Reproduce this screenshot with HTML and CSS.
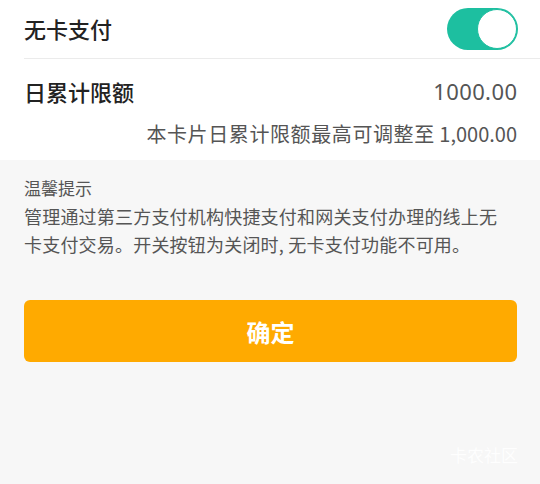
FILE: index.html
```html
<!DOCTYPE html>
<html lang="zh">
<head>
<meta charset="utf-8">
<link rel="stylesheet" href="styles.css">
</head>
<body>
<div class="page">
  <section class="card">
    <div class="row row-switch">
      <span class="label">无卡支付</span>
      <span class="toggle"><span class="knob"></span></span>
    </div>
    <div class="row row-limit">
      <span class="label">日累计限额</span>
      <span class="value">1000.00</span>
    </div>
    <div class="hint"><span class="hint-cjk">本卡片日累计限额最高可调整至</span> 1,000.00</div>
  </section>
  <section class="tips">
    <div class="tips-title">温馨提示</div>
    <p class="tips-body">管理通过第三方支付机构快捷支付和网关支付办理的线上无卡支付交易。开关按钮为关闭时, 无卡支付功能不可用。</p>
  </section>
  <div class="actions">
    <button class="btn">确定</button>
  </div>
  <div class="watermark">卡农社区</div>
</div>
</body>
</html>
```

FILE: styles.css
```css
* { box-sizing: border-box; }
html, body {
  margin: 0;
  padding: 0;
  background: #f7f7f7;
  font-family: "Noto Sans CJK SC", "Noto Sans", Roboto, sans-serif;
}
.page {
  position: relative;
  width: 540px;
  height: 484px;
  background: #f7f7f7;
}
.card {
  background: #fff;
  padding-left: 24px;
  height: 160px;
}
.row {
  display: flex;
  align-items: center;
  justify-content: space-between;
  padding-right: 23px;
}
.row-switch {
  height: 59px;
  border-bottom: 1px solid #ebebeb;
}
.row-limit {
  height: 64px;
}
.label {
  font-size: 22px;
  font-weight: 500;
  color: #222;
  line-height: 1;
}
.row-switch .label { margin-top: -2px; }
.value {
  font-family: "Noto Sans", "Noto Sans CJK SC", sans-serif;
  font-size: 22px;
  letter-spacing: 0.4px;
  margin-right: -0.4px;
  color: #555;
}
.toggle {
  position: relative;
  width: 71px;
  height: 42px;
  border-radius: 21px;
  background: #1dbfa0;
  margin-top: -1px;
  margin-right: -1px;
}
.knob {
  position: absolute;
  right: 1px;
  top: 1px;
  width: 40px;
  height: 40px;
  border-radius: 50%;
  background: #fff;
  border: 1px solid #1dbfa0;
}
.hint {
  text-align: right;
  padding-right: 23px;
  font-size: 20px;
  color: #555;
  line-height: 26px;
  margin-top: -2px;
}
.hint-cjk {
  letter-spacing: 0.6px;
}
.tips {
  padding: 16px 40px 0 24px;
}
.tips-title {
  font-size: 17px;
  color: #555;
  line-height: 24px;
}
.tips-body {
  margin: 2px 0 0 0;
  font-size: 18px;
  color: #555;
  line-height: 28px;
  letter-spacing: 0.2px;
}
.actions {
  padding: 42px 23px 0 24px;
}
.btn {
  display: block;
  width: 100%;
  height: 62px;
  border: none;
  border-radius: 6px;
  background: #ffaa00;
  color: #fff;
  font-family: "Noto Sans CJK SC", sans-serif;
  font-weight: 700;
  font-size: 24px;
}
.watermark {
  position: absolute;
  right: 22px;
  top: 442px;
  font-size: 17px;
  color: #ffffff;
  opacity: 0.9;
}
```
